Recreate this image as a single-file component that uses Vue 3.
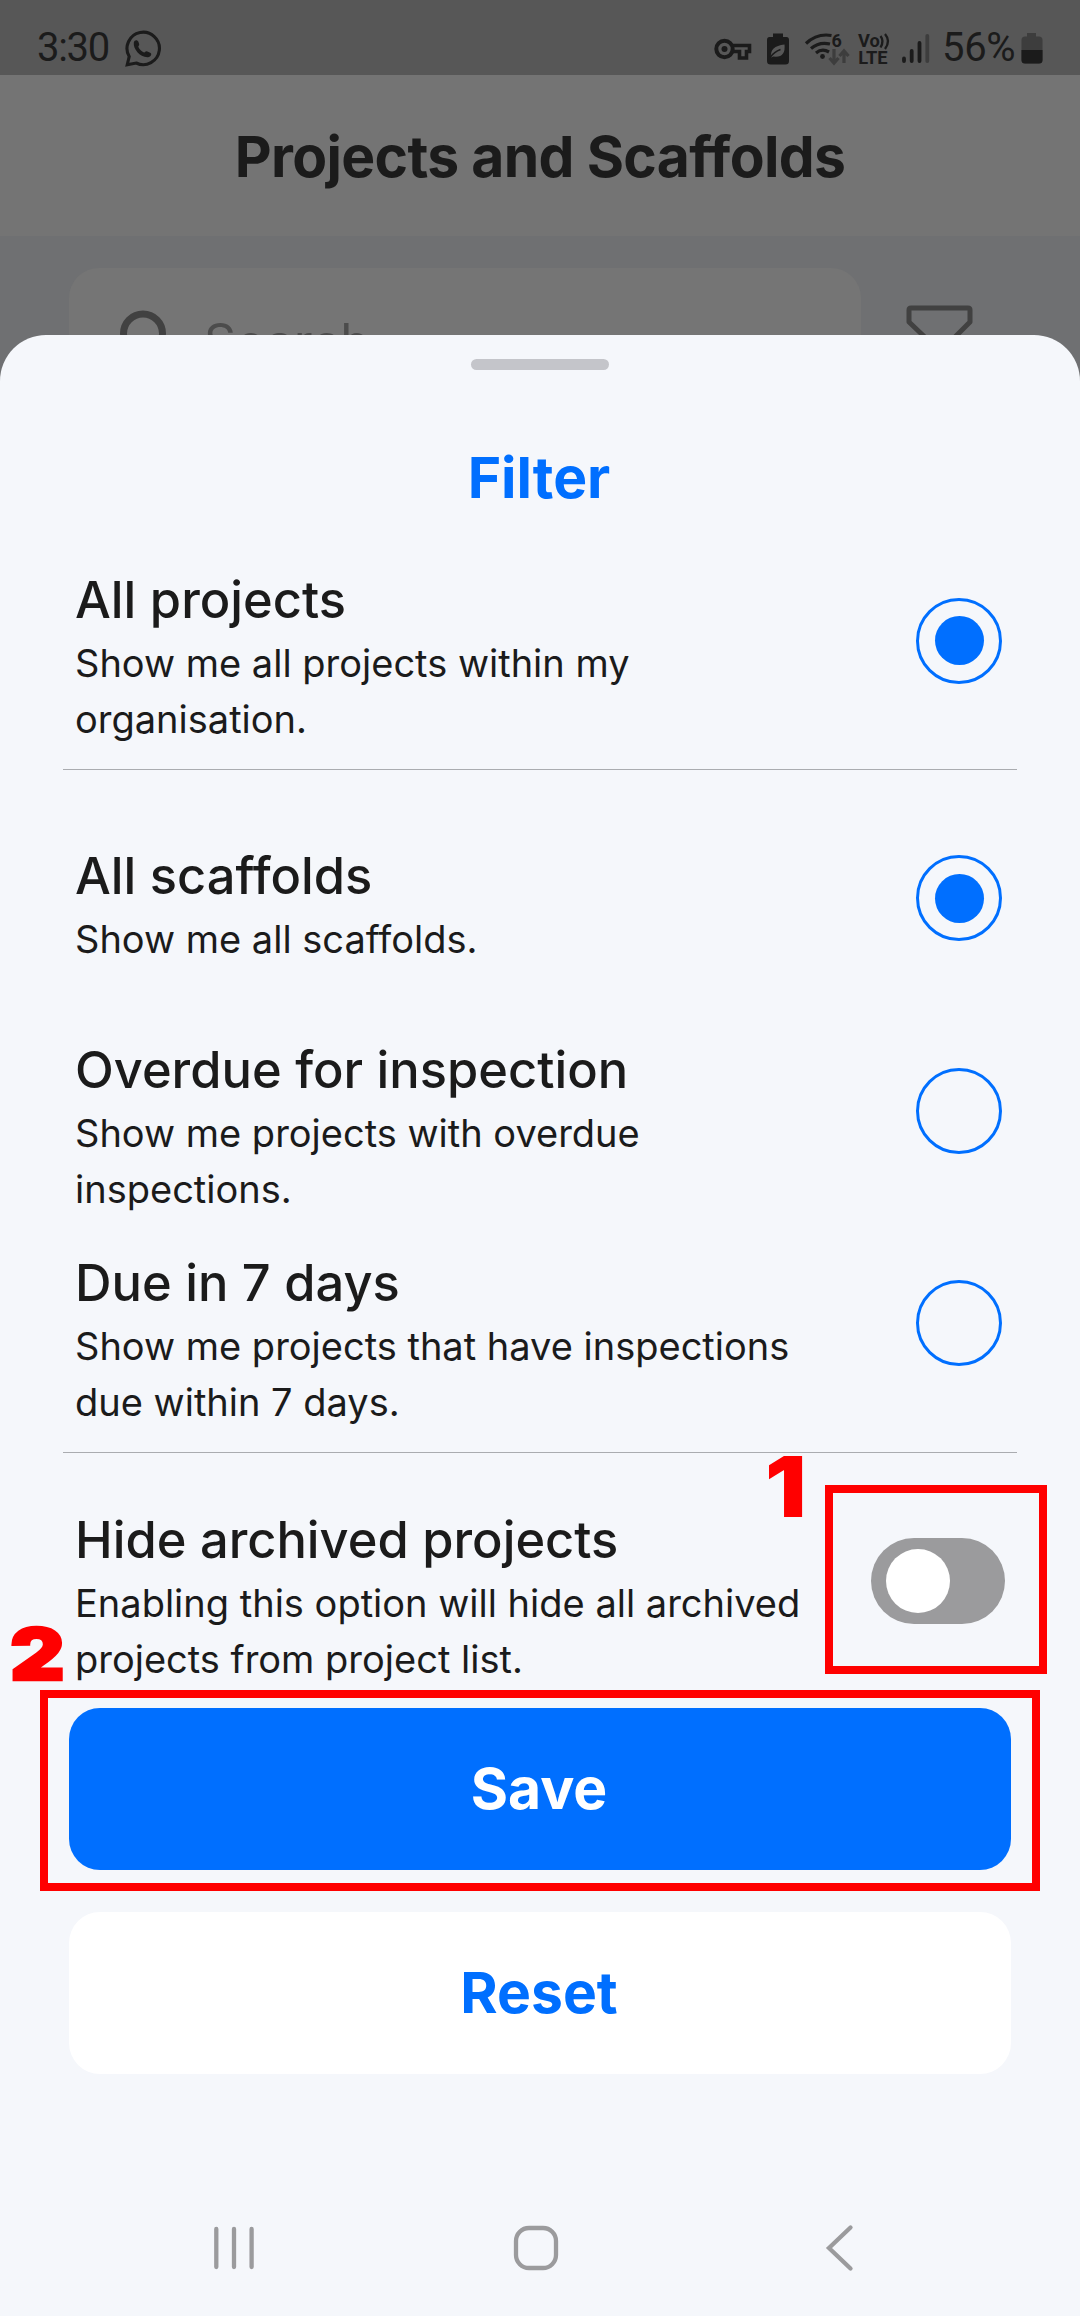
<script setup>
import { ref } from 'vue'

const groups = ref([
  {
    id: 'projects',
    options: [
      { title: 'All projects', text: 'Show me all projects within my organisation.', checked: true }
    ]
  },
  {
    id: 'scaffolds',
    options: [
      { title: 'All scaffolds', text: 'Show me all scaffolds.', checked: true, short: true },
      { title: 'Overdue for inspection', text: 'Show me projects with overdue inspections.', checked: false },
      { title: 'Due in 7 days', text: 'Show me projects that have inspections due within 7 days.', checked: false }
    ]
  }
])
</script>

<template>
  <div class="screen">
    <header class="status">
      <span class="clock">3:30</span>
      <svg class="whatsapp" width="38" height="38" viewBox="0 0 38 38">
        <path d="M3.2 34.8 5.2 26.5A16.2 16.2 0 1 1 12.2 33Z" fill="none" stroke="#1b1b1b" stroke-width="3.1" stroke-linejoin="miter" />
        <path d="M9.8 12.6C10.4 9.6 13.6 9.6 14.4 11.8L15.2 14.2C15.5 15.4 14 16 14.4 17C15.4 19.4 17.6 21.6 20 22.4C21 22.6 21.5 21 22.8 21.3L26.2 22.7C28.3 23.7 27 27 24 27.2C16 27.6 9 19 9.8 12.6Z" fill="#1b1b1b" />
      </svg>

      <svg class="tray" width="240" height="40" viewBox="705 30 240 40">
        <g fill="none" stroke="#1b1b1b">
          <circle cx="724.5" cy="49" r="8.2" stroke-width="4" />
          <path d="M732 45.500H749.500V51.500H746.500V58H739.500V51.500H732" stroke-width="3.6" />
        </g>
        <circle cx="724.5" cy="49" r="3" fill="#1b1b1b" />

        <path d="M773 33.500H783V37H786.500Q789 37 789 40V61Q789 64.500 785.500 64.500H770.500Q767 64.500 767 61V40Q767 37 769.500 37H773Z" fill="#1b1b1b" />
        <path d="M771 57.500Q769.500 46 784.500 44.500Q786 58 773.500 56.500Z" fill="#575757" />
        <path d="M770.500 57Q774 52 780.500 49.500" fill="none" stroke="#1b1b1b" stroke-width="1.5" />

        <g fill="none" stroke="#1b1b1b" stroke-width="3.2">
          <path d="M806 43.500Q817 33 831.500 35.500" />
          <path d="M811 48.500Q819 41.500 830 44" />
          <path d="M816 53Q822 48 829 52" />
        </g>
        <circle cx="822.5" cy="56.5" r="2.4" fill="#1b1b1b" />
        <text x="831.5" y="47" font-size="18" font-weight="700" fill="#1b1b1b">6</text>
        <g fill="none" stroke="#3d3d3d" stroke-width="3.2">
          <path d="M834 49V62M829.500 58 834 63 838.500 58" />
          <path d="M844 63V52M839.500 56 844 51 848.500 56" />
        </g>

        <text font-size="18.3" font-weight="700" fill="#1b1b1b"><tspan x="858" y="47.3">Vo</tspan><tspan x="858.2" y="64">LTE</tspan></text>
        <path d="M880.500 36Q884.500 41 880.500 47.500M885 34Q891 41 885 49" fill="none" stroke="#1b1b1b" stroke-width="2.3" />

        <g fill="none" stroke-width="3.8" stroke-linecap="round">
          <path d="M904 58.500V61M911.700 51V61M919.500 43V61" stroke="#1b1b1b" />
          <path d="M927.300 36V61" stroke="#3d3d3d" />
        </g>
      </svg>
      <span class="percent">56%</span>
      <svg class="battery" width="22" height="32" viewBox="0 0 22 32">
        <path d="M6 1H15V4.500H18Q21.500 4.500 21.500 8V28Q21.500 31.500 18 31.500H4Q.5 31.500 .5 28V8Q.5 4.500 4 4.500H6Z" fill="#3d3d3d" />
        <path d="M.5 18H21.500V28Q21.500 31.500 18 31.500H4Q.5 31.500 .5 28Z" fill="#1b1b1b" />
      </svg>
    </header>

    <div class="appbar">Projects and Scaffolds</div>

    <div class="behind">
      <div class="search">
        <svg width="56" height="56" viewBox="0 0 56 56" fill="none" stroke="#414141" stroke-width="7">
          <circle cx="26" cy="26.5" r="19.5" />
          <path d="M40 41 52 53" />
        </svg>
        <span>Search</span>
      </div>
      <svg class="funnel" width="68" height="70" viewBox="0 0 68 70" fill="none" stroke="#414141" stroke-width="5" stroke-linejoin="round">
        <path d="M5 3H62Q64 3 64 5V17L43 38V58L25 66V38L3 17V5Q3 3 5 3Z" />
      </svg>
    </div>

    <main class="sheet">
      <div class="handle"></div>
      <h1>Filter</h1>

      <template v-for="group in groups" :key="group.id">
        <section>
          <div v-for="option in group.options" :key="option.title" class="row" :class="{ short: option.short }">
            <div class="copy">
              <h2>{{ option.title }}</h2>
              <p>{{ option.text }}</p>
            </div>
            <span class="radio"><i v-if="option.checked"></i></span>
          </div>
        </section>
        <hr />
      </template>

      <div class="row">
        <div class="copy">
          <h2>Hide archived projects</h2>
          <p>Enabling this option will hide all archived projects from project list.</p>
        </div>
        <span class="toggle"><i></i></span>
      </div>

      <div class="actions">
        <button class="save">Save</button>
        <button class="reset">Reset</button>
      </div>
    </main>

    <nav class="navbar">
      <svg width="40" height="48" viewBox="0 0 40 48"><path d="M2.3 5V43M20 5V43M37.6 5V43" /></svg>
      <svg class="home" width="48" height="48" viewBox="0 0 48 48"><rect x="4" y="4" width="40" height="40" rx="13" /></svg>
      <svg width="30" height="48" viewBox="0 0 30 48"><path d="M26.500 3.500 5 24 26.500 44.500" /></svg>
    </nav>

    <div class="mark mark-toggle"></div>
    <div class="mark mark-save"></div>
    <span class="step step-one">1</span>
    <span class="step step-two">2</span>
  </div>
</template>

<style>
body {
  background: #f5f7fb;
}
</style>

<style scoped>
.screen {
  position: relative;
  display: flex;
  flex-direction: column;
  width: 1080px;
  height: 2316px;
  overflow: hidden;
  background: #6f7072;
  color: #1b1b1b;
  font-family: Inter, "Liberation Sans", sans-serif;
  font-feature-settings: "calt" 0, "liga" 0;
}
.status {
  display: flex;
  flex: none;
  align-items: flex-start;
  height: 75px;
  padding: 0 37px;
  box-sizing: border-box;
  background: #575757;
  font-family: Roboto, sans-serif;
}
.clock,
.percent {
  font-size: 40px;
  line-height: 48px;
  padding-top: 24px;
}
.clock {
  width: 87px;
  letter-spacing: -1.3px;
}
.percent {
  width: 79px;
  letter-spacing: -0.3px;
  margin-left: -3px;
}
.whatsapp {
  margin-top: 30px;
}
.tray {
  margin: 30px 0 0 auto;
}
.tray text {
  font-family: Roboto, sans-serif;
}
.battery {
  margin-top: 32px;
}
.appbar {
  flex: none;
  height: 161px;
  padding-top: 1px;
  box-sizing: border-box;
  background: #747474;
  font-size: 57px;
  font-weight: 700;
  line-height: 161px;
  letter-spacing: -0.66px;
  text-align: center;
}
.behind {
  display: flex;
  flex: none;
  align-items: flex-start;
  height: 99px;
  padding: 32px 0 0 69px;
  box-sizing: border-box;
}
.search {
  display: flex;
  flex: none;
  align-items: center;
  gap: 31px;
  width: 792px;
  height: 134px;
  padding-left: 48px;
  box-sizing: border-box;
  border-radius: 30px;
  background: #757575;
  color: #4c4c4c;
  font-size: 50px;
}
.search span {
  padding-top: 14px;
}
.search svg {
  padding-bottom: 1px;
}
.funnel {
  flex: none;
  margin: 37px 0 0 45px;
}
.sheet {
  position: relative;
  display: flex;
  flex: none;
  flex-direction: column;
  height: 1844px;
  background: #f5f7fb;
  border-radius: 46px 46px 0 0;
}
.handle {
  flex: none;
  width: 138px;
  height: 11px;
  margin: 24px auto 0;
  border-radius: 6px;
  background: #c4c5ca;
}
h1 {
  flex: none;
  height: 164.5px;
  margin: 0;
  padding: 73px 2px 0 0;
  box-sizing: border-box;
  color: #006fff;
  font-size: 57px;
  font-weight: 700;
  line-height: 70px;
  text-align: center;
}
.row {
  display: flex;
  align-items: center;
  justify-content: space-between;
  height: 212.5px;
  padding: 0 78px 0 75px;
}
.copy {
  align-self: flex-start;
  width: 740px;
  padding-top: 29.5px;
}
.short .copy {
  padding-top: 47.8px;
}
h2 {
  margin: 0;
  font-size: 50.6px;
  font-weight: 500;
  line-height: 71px;
}
p {
  margin: 0;
  font-size: 38px;
  line-height: 56px;
}
hr {
  height: 1px;
  margin: 22px 63px;
  border: 0;
  background: #aaacb0;
}
.radio {
  display: flex;
  align-items: center;
  justify-content: center;
  width: 86px;
  height: 86px;
  box-sizing: border-box;
  border: 3px solid #006fff;
  border-radius: 50%;
}
.radio i {
  width: 49px;
  height: 49px;
  border-radius: 50%;
  background: #006fff;
}
.toggle {
  display: flex;
  align-items: center;
  width: 134px;
  height: 86px;
  margin-right: -3px;
  padding-left: 15px;
  box-sizing: border-box;
  border-radius: 43px;
  background: #9b9b9d;
}
.toggle i {
  width: 64px;
  height: 64px;
  border-radius: 50%;
  background: #fff;
}
.actions {
  display: flex;
  flex-direction: column;
  gap: 42.5px;
  margin: 21px 69px 0;
}
button {
  height: 161.5px;
  padding: 0 2px 0 0;
  border: 0;
  border-radius: 31px;
  font: 700 57px/161px Inter, sans-serif;
}
.save {
  background: #006fff;
  color: #fff;
}
.reset {
  background: #fff;
  color: #006fff;
}
.navbar {
  display: flex;
  flex: 1;
  align-items: center;
  justify-content: space-between;
  padding: 1px 226px 0 214px;
  background: #f5f7fb;
}
.navbar svg {
  fill: none;
  stroke: #9b9b9d;
  stroke-width: 4.3px;
  stroke-linecap: round;
}
.navbar .home {
  margin-right: 6px;
}
.mark {
  position: absolute;
  box-sizing: border-box;
  border: 8px solid #f00;
}
.mark-toggle {
  left: 825px;
  top: 1485px;
  width: 222px;
  height: 189px;
}
.mark-save {
  left: 40px;
  top: 1690px;
  width: 1000px;
  height: 201px;
}
.step {
  position: absolute;
  color: #f00;
  font-weight: 900;
  line-height: 1;
  transform-origin: 0 0;
}
.step-one {
  left: 765px;
  top: 1445px;
  font-size: 84px;
  transform: scaleX(1.09);
}
.step-two {
  left: 9.5px;
  top: 1619px;
  font-size: 71px;
  transform: scaleX(1.19);
  -webkit-text-stroke: 2.5px #f00;
}
</style>
